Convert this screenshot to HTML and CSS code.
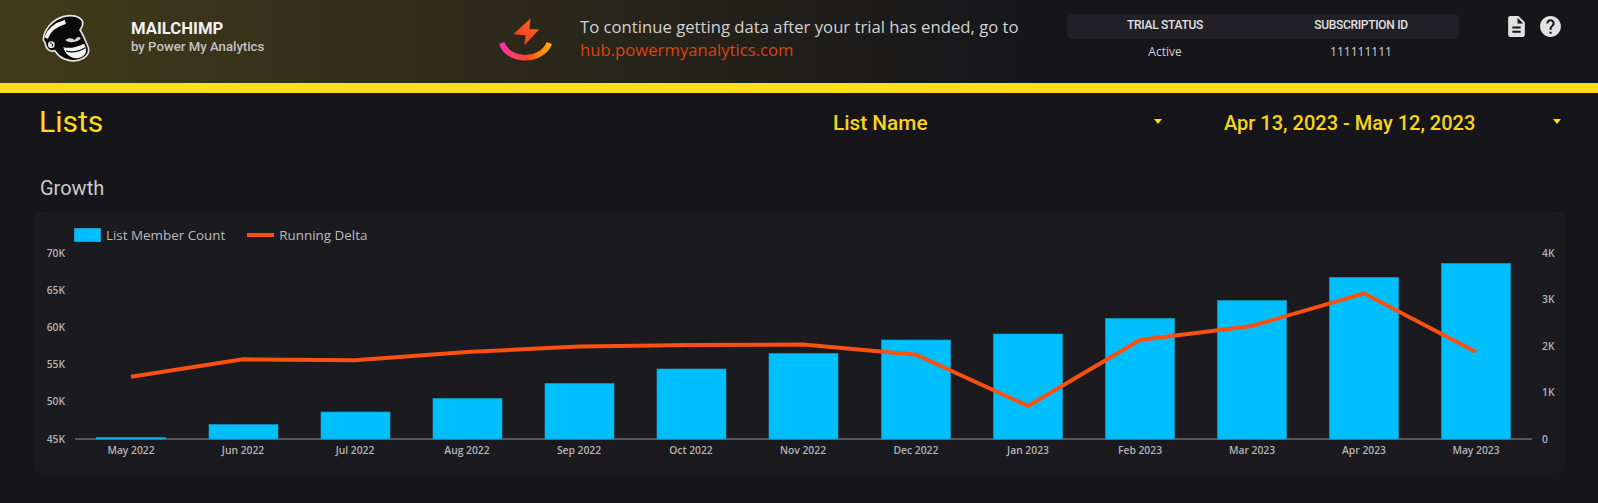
FILE: index.html
```html
<!DOCTYPE html>
<html lang="en">
<head>
    <meta charset="UTF-8">
    <meta name="viewport" content="width=device-width, initial-scale=1.0">
    <title>Mailchimp - Lists</title>
    <link rel="stylesheet" href="styles.css">
</head>
<body>
    <header class="topbar">
        <div class="brand">
            <!-- Mailchimp mark -->
            <svg class="brand-logo" width="70" height="60" viewBox="0 0 210 180">
                <path d="M40 88C42 60 65 30 100 20C125 13 150 18 158 35C160 48 154 55 150 60C160 75 165 90 172 105C182 125 172 140 155 147C135 158 105 152 88 138C80 130 78 126 74 122C60 128 46 115 46 100C44 95 40 92 40 88Z" fill="#0a0a0a" stroke="#e4e4dc" stroke-width="5"/>
                <path d="M48 84C56 62 76 44 106 36" fill="none" stroke="#f4f4f0" stroke-width="12"/>
                <circle cx="64" cy="104" r="10" fill="#e8e8e4"/>
                <path d="M60 99C66 98 70 103 67 110" fill="none" stroke="#0a0a0a" stroke-width="3"/>
                <path d="M106 90C118 80 130 86 134 90C140 80 148 78 152 84C148 96 118 102 106 90Z" fill="#d8d8d4"/>
                <path d="M100 112C118 116 142 112 162 101C174 122 168 138 148 143C126 150 106 134 100 112Z" fill="#f4f4f0"/>
                <path d="M108 123C126 128 148 124 166 113" fill="none" stroke="#0a0a0a" stroke-width="3.5"/>
            </svg>
            <div>
                <div class="brand-name">MAILCHIMP</div>
                <div class="brand-sub">by Power My Analytics</div>
            </div>
        </div>
        <div class="notice">
            <svg class="notice-icon" width="70" height="60" viewBox="0 0 210 180">
                <defs>
                    <linearGradient id="arcGrad" gradientUnits="userSpaceOnUse" x1="30" y1="0" x2="182" y2="0">
                        <stop offset="0" stop-color="#ff2fb4"/>
                        <stop offset="0.55" stop-color="#ff4a22"/>
                        <stop offset="1" stop-color="#ffb400"/>
                    </linearGradient>
                    <linearGradient id="boltGrad" gradientUnits="userSpaceOnUse" x1="70" y1="100" x2="148" y2="30">
                        <stop offset="0" stop-color="#ff3030"/>
                        <stop offset="1" stop-color="#ff6a18"/>
                    </linearGradient>
                </defs>
                <polygon points="122,25 118,58 148,58 103,106 107,76 70,73" fill="url(#boltGrad)"/>
                <path d="M35 99C55 158 155 158 178 99" fill="none" stroke="url(#arcGrad)" stroke-width="17"/>
            </svg>
            <p class="notice-text">
                To continue getting data after your trial has ended, go to<br>
                <a href="#">hub.powermyanalytics.com</a>
            </p>
        </div>
        <table class="status">
            <thead>
                <tr><th>TRIAL STATUS</th><th>SUBSCRIPTION ID</th></tr>
            </thead>
            <tbody>
                <tr><td>Active</td><td>111111111</td></tr>
            </tbody>
        </table>
        <div class="actions">
            <svg width="25" height="25" viewBox="0 0 24 24"><path d="M14 2H6c-1.1 0-2 .9-2 2v16c0 1.1.89 2 1.99 2H18c1.1 0 2-.9 2-2V8l-6-6zm2 16H8v-2h8v2zm0-4H8v-2h8v2zm-3-5V3.5L18.5 9H13z"/></svg>
            <svg width="25" height="25" viewBox="0 0 24 24"><path d="M12 2C6.48 2 2 6.48 2 12s4.48 10 10 10 10-4.48 10-10S17.52 2 12 2zm1 17h-2v-2h2v2zm2.07-7.75l-.9.92C13.45 12.9 13 13.5 13 15h-2v-.5c0-1.1.45-2.1 1.17-2.83l1.24-1.26c.37-.36.59-.86.59-1.41 0-1.1-.9-2-2-2s-2 .9-2 2H8c0-2.21 1.79-4 4-4s4 1.79 4 4c0 .88-.36 1.68-.93 2.25z"/></svg>
        </div>
    </header>

    <div class="toolbar">
        <h1>Lists</h1>
        <div class="filter filter-list"><span>List Name</span><i class="caret"></i></div>
        <div class="filter filter-date"><span>Apr 13, 2023 - May 12, 2023</span><i class="caret"></i></div>
    </div>

    <h2>Growth</h2>

    <section class="card">
        <div class="legend">
            <span class="legend-item"><i class="swatch-bar"></i>List Member Count</span>
            <span class="legend-item"><i class="swatch-line"></i>Running Delta</span>
        </div>
        <svg class="chart" width="1532" height="230" viewBox="33 243 1532 230">
            <g class="axis-left">
                <text x="65" y="257">70K</text>
                <text x="65" y="294">65K</text>
                <text x="65" y="331">60K</text>
                <text x="65" y="368">55K</text>
                <text x="65" y="405">50K</text>
                <text x="65" y="443">45K</text>
            </g>
            <g class="axis-right">
                <text x="1542" y="257">4K</text>
                <text x="1542" y="303">3K</text>
                <text x="1542" y="350">2K</text>
                <text x="1542" y="396">1K</text>
                <text x="1542" y="443">0</text>
            </g>
            <line class="baseline" x1="75" y1="439" x2="1532" y2="439"/>
            <g class="bars">
                <rect x="96.5" y="437.5" width="69" height="1.5"/>
                <rect x="209" y="424.5" width="69" height="14.5"/>
                <rect x="321" y="412" width="69" height="27"/>
                <rect x="433" y="398.5" width="69" height="40.5"/>
                <rect x="545" y="383.5" width="69" height="55.5"/>
                <rect x="657" y="369" width="69" height="70"/>
                <rect x="769" y="353.5" width="69" height="85.5"/>
                <rect x="881.5" y="340" width="69" height="99"/>
                <rect x="993.5" y="334" width="69" height="105"/>
                <rect x="1105.5" y="318.5" width="69" height="120.5"/>
                <rect x="1217.5" y="300.5" width="69" height="138.5"/>
                <rect x="1329.5" y="277.5" width="69" height="161.5"/>
                <rect x="1441.5" y="263.5" width="69" height="175.5"/>
            </g>
            <polyline class="delta" points="131,376.7 243,359.3 355,360.3 467,352 579,346.5 691,345 803,344.5 916,354.7 1028,406 1140,340 1252,326 1364,293.3 1476,352"/>
            <g class="axis-x">
                <text x="131" y="454">May 2022</text>
                <text x="243" y="454">Jun 2022</text>
                <text x="355" y="454">Jul 2022</text>
                <text x="467" y="454">Aug 2022</text>
                <text x="579" y="454">Sep 2022</text>
                <text x="691" y="454">Oct 2022</text>
                <text x="803" y="454">Nov 2022</text>
                <text x="916" y="454">Dec 2022</text>
                <text x="1028" y="454">Jan 2023</text>
                <text x="1140" y="454">Feb 2023</text>
                <text x="1252" y="454">Mar 2023</text>
                <text x="1364" y="454">Apr 2023</text>
                <text x="1476" y="454">May 2023</text>
            </g>
        </svg>
    </section>
</body>
</html>
```

FILE: styles.css
```css
body {
    margin: 0;
    padding: 0;
    font-family: "Open Sans", sans-serif;
    color: #ccc;
    background-color: #15151a;
    overflow: hidden;
}
.topbar {
    display: flex;
    align-items: flex-start;
    height: 83px;
    background: linear-gradient(90deg, #423b1b 0%, #15151a 66%);
    border-bottom: 10px solid #ffdf1b;
}
.brand {
    display: flex;
    width: 490px;
    padding: 10px 0 0 30px;
    box-sizing: border-box;
}
.brand-logo {
    margin-right: 31px;
}
.brand-name {
    margin-top: 9px;
    font-family: Roboto, sans-serif;
    font-size: 16.7px;
    font-weight: 700;
    line-height: 20px;
    color: #f2f2f2;
}
.brand-sub {
    font-family: Roboto, sans-serif;
    font-size: 13.2px;
    font-weight: 500;
    line-height: 16px;
    color: #c4c4c4;
}
.notice {
    display: flex;
    width: 577px;
    padding-top: 10px;
    box-sizing: border-box;
}
.notice-text {
    margin: 5px 0 0 20px;
    font-size: 16.7px;
    line-height: 23px;
    color: #d2d2d2;
}
.notice-text a {
    color: #dc4410;
    text-decoration: none;
}
.status {
    width: 392px;
    margin-top: 14px;
    border-collapse: collapse;
    table-layout: fixed;
}
.status th {
    height: 25px;
    padding: 0 0 3px;
    box-sizing: border-box;
    font-family: Roboto, sans-serif;
    font-size: 12px;
    font-weight: 500;
    letter-spacing: -0.3px;
    color: #e0e0e0;
    background-color: #202026;
}
.status th:first-child {
    border-radius: 5px 0 0 5px;
}
.status th:last-child {
    border-radius: 0 5px 5px 0;
}
.status td {
    height: 25px;
    padding: 0;
    font-size: 12px;
    text-align: center;
    color: #d0d0d0;
}
.actions {
    display: flex;
    gap: 9px;
    margin: 14px 0 0 45px;
    fill: #e2e2e2;
}
.toolbar {
    display: flex;
    align-items: center;
    height: 56px;
    color: #fddc1a;
    font-family: Roboto, sans-serif;
}
h1 {
    width: 794px;
    margin: 0 0 0 39px;
    font-size: 30px;
    font-weight: 400;
}
.filter {
    display: flex;
    align-items: center;
    justify-content: space-between;
    padding-top: 4px;
    font-size: 20px;
    font-weight: 500;
    color: #f5d516;
}
.filter-list {
    width: 329px;
    margin-right: 62px;
    font-size: 20.8px;
}
.filter-date {
    width: 337px;
}
.caret {
    width: 0;
    height: 0;
    margin-top: -3px;
    border-left: 4px solid transparent;
    border-right: 4px solid transparent;
    border-top: 5px solid #fddc1a;
}
h2 {
    margin: 27px 0 11px 40px;
    font-family: Roboto, sans-serif;
    font-size: 20px;
    font-weight: 400;
    line-height: 24px;
    color: #cbcbcf;
}
.card {
    width: 1532px;
    height: 262px;
    margin-left: 33px;
    background-color: #1a1a1f;
    border-radius: 8px;
}
.legend {
    display: flex;
    gap: 22px;
    padding: 15px 0 0 41px;
    height: 17px;
    font-size: 13.4px;
    line-height: 16px;
    color: #bbb;
}
.legend-item {
    display: flex;
    align-items: center;
    gap: 5px;
}
.swatch-bar {
    width: 27px;
    height: 14px;
    background-color: #00bfff;
    box-shadow: inset 0 0 0 1px #1a9fcc;
}
.swatch-line {
    width: 27px;
    height: 4px;
    background-color: #fa5012;
}
.chart {
    display: block;
}
.chart text {
    font-size: 10.3px;
    font-weight: 600;
    fill: #b4b4b4;
}
.axis-left text {
    text-anchor: end;
}
.axis-x text {
    text-anchor: middle;
}
.baseline {
    stroke: #6c6c70;
    stroke-width: 1.5;
}
.bars rect {
    fill: #00bfff;
    stroke: #1a9fcc;
    stroke-width: 0.6;
}
.delta {
    fill: none;
    stroke: #fa5012;
    stroke-width: 4;
}
```
